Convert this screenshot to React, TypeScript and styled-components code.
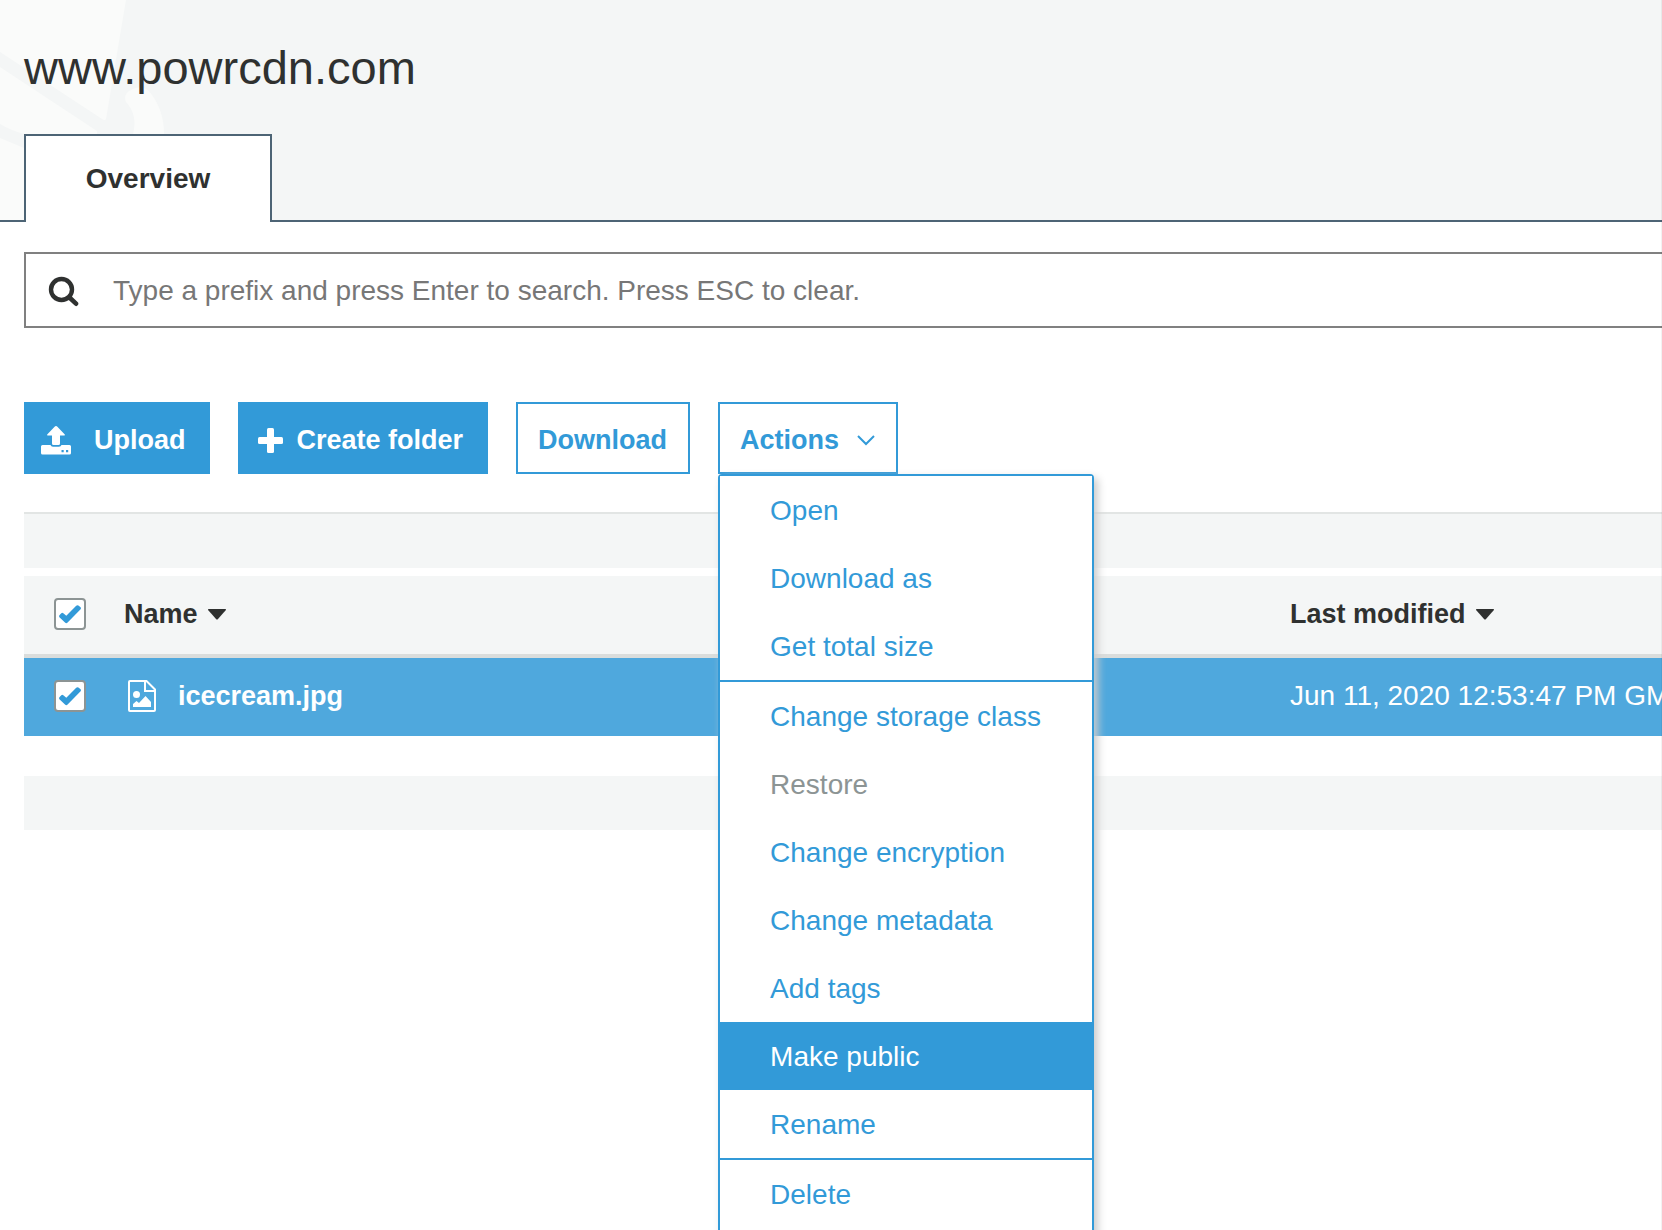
import React from "react";
import styled, { createGlobalStyle, css } from "styled-components";

const blue = "#329ad8";
const ink = "#2f3130";
const pale = "#f4f6f6";

const GlobalStyle = createGlobalStyle`
  *, *::before, *::after { box-sizing: border-box; }
  body {
    margin: 0;
    background: #fff;
    color: ${ink};
    font: 28px/32px "Liberation Sans", Arial, sans-serif;
  }
  button, input { font: inherit; color: inherit; }
`;

const Page = styled.div`
  position: relative;
  min-height: 100vh;
  overflow: hidden;
  &::after {
    content: "";
    position: absolute;
    inset: 0 0 0 auto;
    width: 1px;
    background: rgba(0, 0, 0, 0.05);
  }
`;

const Header = styled.header`
  position: relative;
  background: ${pale};
  padding-top: 40px;
`;

const Watermark = styled.svg`
  position: absolute;
  top: 0;
  left: 0;
  fill: #fafbfa;
`;

const Title = styled.h1`
  position: relative;
  margin: 0 24px 38px;
  font-size: 47px;
  line-height: 56px;
  font-weight: 400;
`;

const Tabs = styled.nav`
  position: relative;
  display: flex;
  &::before, &::after {
    content: "";
    width: 24px;
    border-bottom: 2px solid #4d6475;
  }
  &::after { flex: 1; }
`;

const Tab = styled.button`
  width: 248px;
  height: 88px;
  padding: 0;
  border: 2px solid #4d6475;
  border-bottom: 0;
  background: #fff;
  font-weight: 700;
`;

const Main = styled.main`
  padding: 30px 0 0 24px;
`;

const SearchBox = styled.label`
  display: flex;
  align-items: center;
  gap: 34px;
  height: 76px;
  padding: 2px 0 0 22px;
  border: 2px solid #808080;
  border-right: 0;
  svg { flex: none; }
`;

const SearchInput = styled.input`
  flex: 1;
  min-width: 0;
  padding: 0;
  border: 0;
  outline: 0;
  background: none;
  &::placeholder { color: #777; opacity: 1; }
`;

const Toolbar = styled.div`
  display: flex;
  gap: 28px;
  margin: 74px 0 38px;
`;

const Button = styled.button<{ $primary?: boolean; $start: number; $end: number; $gap?: number }>`
  display: flex;
  align-items: center;
  gap: ${(p) => p.$gap ?? 0}px;
  height: 72px;
  padding: 4px ${(p) => p.$end}px 0 ${(p) => p.$start}px;
  border: 2px solid ${blue};
  background: ${(p) => (p.$primary ? blue : "#fff")};
  color: ${(p) => (p.$primary ? "#fff" : blue)};
  font-size: 27px;
  font-weight: 700;
  white-space: nowrap;
`;

const MenuAnchor = styled.div`
  position: relative;
`;

const Menu = styled.ul`
  position: absolute;
  z-index: 2;
  top: 100%;
  left: 0;
  width: 376px;
  margin: 0;
  padding: 0 0 68px;
  list-style: none;
  background: #fff;
  border: 2px solid ${blue};
  border-radius: 4px;
  box-shadow: 4px 4px 8px #ccc;
`;

const MenuGroup = styled.li`
  & + & { border-top: 2px solid ${blue}; }
`;

const MenuItem = styled.button<{ $active?: boolean }>`
  display: block;
  width: 100%;
  height: 68px;
  padding: 2px 50px 0;
  border: 0;
  background: #fff;
  color: ${blue};
  text-align: left;
  &:disabled { color: #8c9494; }
  ${(p) => p.$active && css`
    background: ${blue};
    color: #fff;
  `}
`;

const Band = styled.div<{ $ruled?: boolean }>`
  height: ${(p) => (p.$ruled ? 56 : 54)}px;
  background: ${pale};
  border-top: ${(p) => (p.$ruled ? "2px solid #e2e5e4" : "0")};
`;

const Files = styled.table`
  width: 100%;
  margin: 8px 0 40px;
  border-collapse: separate;
  border-spacing: 0;
  table-layout: fixed;
  text-align: left;
  white-space: nowrap;
`;

const CheckCol = styled.col`width: 100px;`;
const DateCol = styled.col`width: 372px;`;

const HeadCell = styled.th`
  height: 82px;
  padding: 0 0 2px;
  background: ${pale};
  border-bottom: 4px solid #dadddc;
  font-size: 27px;
`;

const Cell = styled.td`
  height: 78px;
  padding: 0 0 2px;
  background: #4fa8dd;
  color: #fff;
`;

const SortButton = styled.button`
  display: flex;
  align-items: center;
  gap: 10px;
  padding: 0;
  border: 0;
  background: none;
  font-weight: 700;
`;

const FileLink = styled.a`
  display: flex;
  align-items: center;
  gap: 22px;
  padding-left: 4px;
  color: #fff;
  font-size: 27px;
  font-weight: 700;
  text-decoration: none;
`;

const CheckBox = styled.span`
  position: relative;
  display: block;
  width: 32px;
  height: 32px;
  margin-left: 30px;
  svg {
    position: absolute;
    top: 7px;
    left: 5px;
    pointer-events: none;
  }
`;

const CheckInput = styled.input`
  appearance: none;
  display: block;
  width: 32px;
  height: 32px;
  margin: 0;
  background: #fff;
  border: 2px solid #8c9494;
  border-radius: 4px;
  & + svg { visibility: hidden; }
  &:checked + svg { visibility: visible; }
`;

function Check({ label }: { label: string }) {
  return (
    <CheckBox>
      <CheckInput type="checkbox" defaultChecked aria-label={label} />
      <svg width="22" height="19" viewBox="0 0 22 19" fill={blue}>
        <path d="M.4 10.200 2.300 8.200Q3.300 7.400 4.300 8.200L7.300 10.800 17.200.800Q18.200 0 19.400.500L21.600 2.300Q22.300 3.200 21.600 4.300L8.600 17.600Q7.300 18.700 6 17.600L.4 12.200Q-.2 11.200.4 10.200z" />
      </svg>
    </CheckBox>
  );
}

function Caret() {
  return (
    <svg width="18" height="11" viewBox="0 0 18 11" fill={ink}>
      <path d="M.6 0h16.800q1 .4.3 1.300L10 10q-1 1-2 0L.3 1.300Q-.4.4.6 0z" />
    </svg>
  );
}

const menuGroups = [
  ["Open", "Download as", "Get total size"],
  ["Change storage class", "Restore", "Change encryption", "Change metadata", "Add tags", "Make public", "Rename"],
  ["Delete"],
];

export default function App() {
  return (
    <Page>
      <GlobalStyle />
      <Header>
        <Watermark width="180" height="220" viewBox="0 0 180 220" aria-hidden="true">
          <path d="M0 0H126L106 119Q105 121 102 119L0 52z" />
          <path d="M0 67 97 131V134H24Q10 130 0 124z" />
          <path d="M0 138 24 148V220H0z" />
          <path d="M136 88Q122 92 126 102Q138 115 133 134H164Q164 108 148 90Q142 86 136 88z" />
        </Watermark>
        <Title>www.powrcdn.com</Title>
        <Tabs>
          <Tab>Overview</Tab>
        </Tabs>
      </Header>
      <Main>
        <SearchBox>
          <svg width="31" height="31" viewBox="0 0 31 31" fill="none" stroke={ink} strokeLinecap="round">
            <circle cx="13.5" cy="13.5" r="10.5" strokeWidth="4.4" />
            <path d="M21.5 21.5 28 27.7" strokeWidth="4.6" />
          </svg>
          <SearchInput
            type="text"
            aria-label="Search by prefix"
            placeholder="Type a prefix and press Enter to search. Press ESC to clear."
          />
        </SearchBox>
        <Toolbar>
          <Button $primary $start={15} $end={22} $gap={23}>
            <svg width="30" height="29" viewBox="0 0 30 29" fill="#fff">
              <path d="M15 0q.8 0 1.4.7l7.400 7.800q.6 1-.6 1H19v8q0 1.500-1.500 1.500h-5q-1.500 0-1.500-1.500v-8H6.800q-1.200 0-.6-1L13.600.7Q14.200 0 15 0z" />
              <path fillRule="evenodd" d="M1.500 19H9.500q.5 1.700 2.500 1.700h6q2 0 2.500-1.700h8q1.500 0 1.500 1.500v6.500q0 1.500-1.500 1.500h-27Q0 28.500 0 27v-6.500q0-1.500 1.500-1.500zM20.500 24v2.200h2.200v-2.200zm4.500 0v2.200h2.200v-2.200z" />
            </svg>
            Upload
          </Button>
          <Button $primary $start={18} $end={23} $gap={14}>
            <svg width="25" height="25" viewBox="0 0 25 25" fill="#fff">
              <rect x="9" width="7" height="25" rx="1.500" />
              <rect y="9" width="25" height="7" rx="1.500" />
            </svg>
            Create folder
          </Button>
          <Button $start={20} $end={21}>Download</Button>
          <MenuAnchor>
            <Button $start={20} $end={21} $gap={18} aria-haspopup="menu" aria-expanded="true">
              Actions
              <svg width="18" height="11" viewBox="0 0 18 11" fill="none" stroke={blue} strokeWidth="2">
                <path d="m1 1 8 8 8-8" />
              </svg>
            </Button>
            <Menu>
              {menuGroups.map((group) => (
                <MenuGroup key={group[0]}>
                  {group.map((item) => (
                    <MenuItem key={item} $active={item === "Make public"} disabled={item === "Restore"}>
                      {item}
                    </MenuItem>
                  ))}
                </MenuGroup>
              ))}
            </Menu>
          </MenuAnchor>
        </Toolbar>
        <Band $ruled />
        <Files>
          <colgroup>
            <CheckCol />
            <col />
            <DateCol />
          </colgroup>
          <thead>
            <tr>
              <HeadCell><Check label="Select all" /></HeadCell>
              <HeadCell><SortButton>Name <Caret /></SortButton></HeadCell>
              <HeadCell><SortButton>Last modified <Caret /></SortButton></HeadCell>
            </tr>
          </thead>
          <tbody>
            <tr>
              <Cell><Check label="Select icecream.jpg" /></Cell>
              <Cell>
                <FileLink href="#">
                  <svg width="28" height="32" viewBox="0 0 28 32" fill="none" stroke="#fff" strokeWidth="2">
                    <path d="M2 1H18.500L27 9.500V30q0 1-1 1H2q-1 0-1-1V2q0-1 1-1zM17 1V11H27" />
                    <circle cx="8.500" cy="14.500" r="3.500" fill="#fff" stroke="none" />
                    <path d="M5 27V24L8.500 21 11 23 17.500 16 23 22V27z" fill="#fff" stroke="none" />
                  </svg>
                  icecream.jpg
                </FileLink>
              </Cell>
              <Cell>Jun 11, 2020 12:53:47 PM GMT</Cell>
            </tr>
          </tbody>
        </Files>
        <Band />
      </Main>
    </Page>
  );
}
